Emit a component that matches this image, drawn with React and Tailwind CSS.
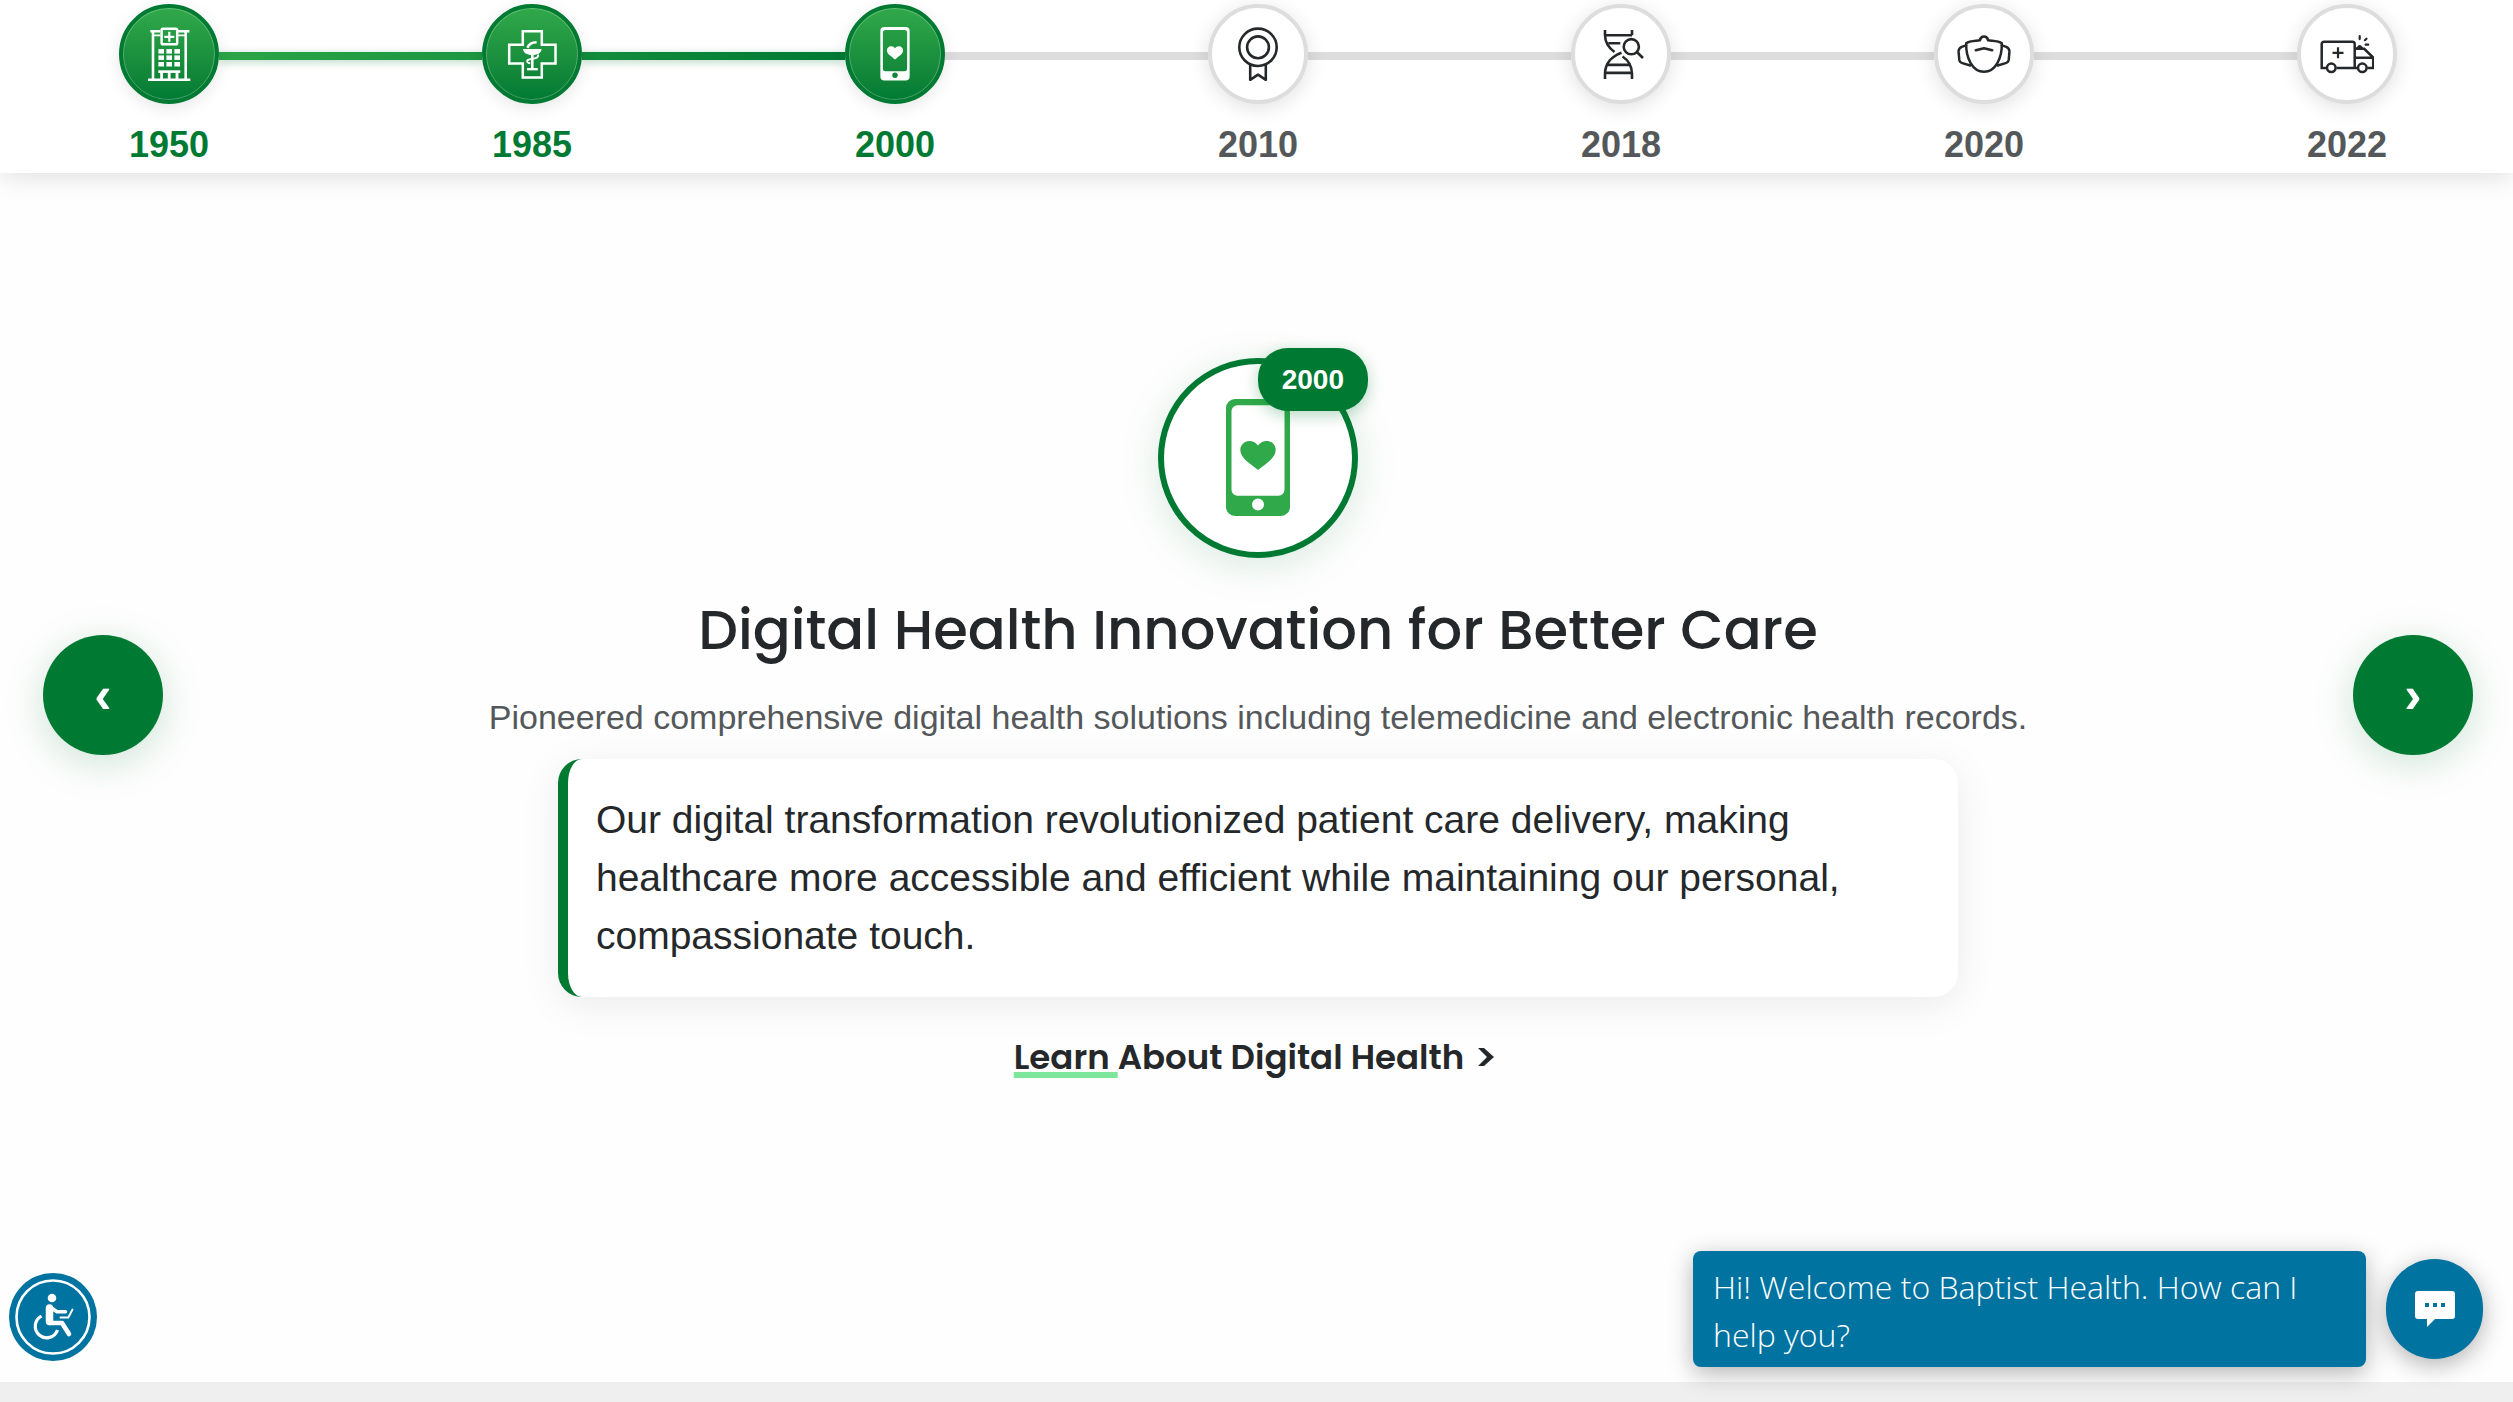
import React from "react";

const line = {
  fill: "none",
  stroke: "currentColor",
  strokeWidth: 2.3,
};

function HospitalIcon() {
  return (
    <svg viewBox="0 0 54 54" className="size-[54px]" aria-hidden="true">
      <g {...line}>
        <path d="M6 52.7h42.3M11 5v47M43.7 5v47" strokeWidth="2.6" />
        <path d="M8.3 4.2h10M36 4.2h11.4" strokeWidth="2.6" />
        <path d="M11 8.4h7.5M36 8.4h7.5" strokeWidth="1.6" />
        <rect x="19.6" y="1.7" width="15.6" height="15.6" rx="1.6" strokeWidth="2.5" />
        <path d="M27.3 4.8v10M22.3 9.8h10" strokeWidth="2.2" />
        <path d="M16.3 44.6h22" strokeWidth="2.6" />
        <path d="M19.6 45v7M27.2 45v7M35 45v7" strokeWidth="2.8" />
      </g>
      {[16.4, 24.4, 32.4].map((x) =>
        [22.1, 28.4, 35].map((y) => (
          <rect key={`${x}-${y}`} x={x} y={y} width="5.6" height="4.5" fill="currentColor" />
        ))
      )}
    </svg>
  );
}

function PharmacyIcon() {
  return (
    <svg viewBox="0 0 54 54" className="size-[54px]" aria-hidden="true">
      <g {...line}>
        <path d="M17.8 4.2h19v13.6h13.7v18.8H36.8v13.9h-19V36.6H4.2V17.8h13.6z" strokeWidth="2.5" />
        <path d="M22.6 20.8c1.2-4 4-5.6 9-5.6" strokeWidth="2.4" />
        <path d="M27.3 27v15" strokeWidth="2.6" />
        <path d="M22 42.2h10.8" />
        <path d="M33 27.5c.8 3-2.4 4-5.7 4.4-4.6.5-6 1.6-4.8 3.4.5.8 1.4 1 2.7 1" strokeWidth="1.9" />
      </g>
      <path d="M18 22h18.6c-.3 3.8-3.6 6-9.3 6S18.3 25.800 18 22z" fill="currentColor" />
    </svg>
  );
}

function PhoneIcon({ className }) {
  return (
    <svg viewBox="0 0 118 118" className={className} aria-hidden="true">
      <path
        fill="currentColor"
        fillRule="evenodd"
        d="M36 0h46a9 9 0 0 1 9 9v99a9 9 0 0 1-9 9H36a9 9 0 0 1-9-9V9a9 9 0 0 1 9-9zM38.5 6.3a6 6 0 0 0-6 6v78.4a6 6 0 0 0 6 6h41a6 6 0 0 0 6-6V12.3a6 6 0 0 0-6-6zM59 99.5a6 6 0 1 0 0 12 6 6 0 0 0 0-12z"
      />
      <path
        fill="currentColor"
        d="M59 71C52 65 41.3 59.5 41.3 51c0-5 4-9 9-9 3.7 0 7 2 8.700 4.500C60.7 44 64 42 67.7 42c5 0 9 4 9 9 0 8.500-10.700 14-17.700 20z"
      />
    </svg>
  );
}

function AwardIcon() {
  return (
    <svg viewBox="0 0 54 54" className="size-[54px]" aria-hidden="true">
      <g {...line} strokeWidth="2.6" strokeLinejoin="round">
        <circle cx="27" cy="20.3" r="18.7" />
        <circle cx="27" cy="20.3" r="10.9" />
        <path d="M19.2 38v14.800l7.800-5.100 7.800 5.100V38" />
      </g>
    </svg>
  );
}

function DnaIcon() {
  return (
    <svg viewBox="0 0 54 54" className="size-[54px]" aria-hidden="true">
      <g {...line} strokeWidth="2.6">
        <path d="M11 3v5c0 7 4 13 9.500 17M38 3v5.200" />
        <path d="M11 8.200h22M38 8.200h-6M14.300 16.300h12" />
        <circle cx="37.300" cy="19.700" r="7.600" />
        <path d="M42.800 25l6.200 6" />
        <path d="M11 52v-5c0-11 7.500-18 16.500-21.300M38 52v-5c0-8-4-14-9.500-17.500" />
        <path d="M12.500 37.800h24M11 45.800h27" strokeWidth="2.800" />
      </g>
    </svg>
  );
}

function MaskIcon() {
  return (
    <svg viewBox="0 0 54 54" className="size-[54px]" aria-hidden="true">
      <g {...line} strokeWidth="2.5" strokeLinecap="round" strokeLinejoin="round">
        <path d="M9.200 16.200C13 13.400 19 14 23 13.200c.8-4.800 7.200-4.800 8 0 4 .8 10 .2 13.800 3C45.200 31 38.500 44.800 27 44.800S8.800 31 9.200 16.200z" />
        <path d="M9 18.400l-4.300 1.500c-2.400 1-3.200 2.600-3.100 5l.7 8c.3 1.800 1 2.600 3 3.200l8 2.400M45 18.400l4.300 1.500c2.400 1 3.200 2.600 3.100 5l-.7 8c-.3 1.800-1 2.600-3 3.200l-8 2.400" />
        <path d="M18.800 23.300L27 21.200l8.200 2.100" />
      </g>
    </svg>
  );
}

function AmbulanceIcon() {
  return (
    <svg viewBox="0 0 54 54" className="size-[54px]" aria-hidden="true">
      <g {...line} strokeWidth="2.5">
        <path d="M6 41H1.700V17a2.300 2.300 0 0 1 2.300-2.300h28.400a2.300 2.300 0 0 1 2.300 2.300v24M16.500 41h20.700M47.300 41h5.900V30.500l-9-8.700h-9.500M35 30.800h18" />
        <circle cx="11.300" cy="40.800" r="4.300" />
        <circle cx="42.300" cy="40.800" r="4.300" />
        <path d="M18 20.300v11M12.500 25.800h11" strokeWidth="2.200" />
        <path d="M39.700 9.200v2.900M44.900 13.200l1.600-1.500M45.600 17.700h2.600" strokeLinecap="round" strokeWidth="2.200" />
      </g>
      <path d="M36 21.800c.4-1.800 1.600-2.300 2.200-3.200.6-.9 2.400-.9 3 0 .6.900 1.800 1.400 2.200 3.200z" fill="currentColor" />
    </svg>
  );
}

function AccessibilityIcon() {
  return (
    <svg viewBox="0 0 88 88" className="size-[88px]" aria-hidden="true">
      <g fill="none" stroke="currentColor" strokeLinecap="round" strokeLinejoin="round">
        <circle cx="44" cy="44" r="36.500" strokeWidth="2.600" />
        <path d="M40.500 35v13.500" strokeWidth="7.500" />
        <path d="M40.500 50h12.500l7 11" strokeWidth="4.600" />
        <path d="M42.500 35l5.500 3.700h8.500" strokeWidth="3.600" />
        <path d="M51.500 44.500h7.800l4.200-8" strokeWidth="1.900" />
        <path d="M32.500 43.200A11.400 11.400 0 1 0 48.500 57" strokeWidth="3.200" strokeLinecap="butt" />
      </g>
      <circle cx="43" cy="25" r="4.300" fill="currentColor" />
    </svg>
  );
}

function ChatIcon() {
  return (
    <svg viewBox="0 0 40 36" className="h-9 w-10" aria-hidden="true">
      <path
        fill="currentColor"
        fillRule="evenodd"
        d="M3 0h34a3 3 0 0 1 3 3v22a3 3 0 0 1-3 3H20l-8 8v-8H3a3 3 0 0 1-3-3V3a3 3 0 0 1 3-3zM10 12v4h4v-4zM18 12v4h4v-4zM26 12v4h4v-4z"
      />
    </svg>
  );
}

const milestones = [
  { year: "1950", icon: <HospitalIcon />, reached: true, connector: "bg-linear-to-r from-[#2ba547] to-[#1b9641] shadow-[0_2px_8px_rgba(0,122,51,0.3)]" },
  { year: "1985", icon: <PharmacyIcon />, reached: true, connector: "bg-linear-to-r from-[#128c3c] to-[#007a33] shadow-[0_2px_8px_rgba(0,122,51,0.3)]" },
  { year: "2000", icon: <PhoneIcon className="size-[54px]" />, reached: true, connector: "bg-[#dddddd]" },
  { year: "2010", icon: <AwardIcon />, connector: "bg-[#dddddd]" },
  { year: "2018", icon: <DnaIcon />, connector: "bg-[#dddddd]" },
  { year: "2020", icon: <MaskIcon />, connector: "bg-[#dddddd]" },
  { year: "2022", icon: <AmbulanceIcon /> },
];

function Timeline() {
  return (
    <nav
      aria-label="Timeline"
      className="relative flex items-start bg-white pt-1 pr-[116px] pb-2 pl-[119px] shadow-[0_4px_24px_rgba(0,0,0,0.12)]"
    >
      {milestones.map(({ year, icon, reached, connector }) => (
        <React.Fragment key={year}>
          <button
            type="button"
            className={`relative z-10 flex w-[100px] shrink-0 flex-col items-center gap-[21px] ${
              reached ? "text-[#007a33]" : "text-[#54585a]"
            }`}
          >
            <span
              className={`flex size-[100px] items-center justify-center rounded-full border-4 ${
                reached
                  ? "border-[#007a33] bg-linear-to-b from-[#30a94a] to-[#007a33] text-white shadow-[0_4px_16px_rgba(0,0,0,0.1),inset_0_0_0_1px_rgba(255,255,255,0.25)]"
                  : "border-[#dddddd] bg-white text-[#25282a] shadow-[0_4px_20px_rgba(0,0,0,0.12)]"
              }`}
            >
              {icon}
            </span>
            <span className="text-4xl/10 font-bold">{year}</span>
          </button>
          {connector && <span className={`mt-12 h-2 flex-1 ${connector}`} />}
        </React.Fragment>
      ))}
    </nav>
  );
}

function ArrowButton({ label, children }) {
  return (
    <button
      type="button"
      aria-label={label}
      className="mt-[277px] flex size-[120px] shrink-0 items-center justify-center rounded-full bg-[#007a33] text-[52px] font-bold text-white shadow-[0_8px_40px_rgba(0,122,51,0.2)]"
    >
      {children}
    </button>
  );
}

export default function App() {
  return (
    <div className="relative flex min-h-screen flex-col bg-[#fefefe] font-['Liberation_Sans',Arial,sans-serif] text-[#25282a]">
      <Timeline />

      <main className="flex flex-1 items-start justify-between pt-[185px] pr-10 pl-[43px]">
        <ArrowButton label="Previous milestone">‹</ArrowButton>

        <article className="flex flex-col items-center">
          <div className="relative flex size-[200px] items-center justify-center rounded-full border-[6px] border-[#007a33] bg-white text-[#30a94a] shadow-[0_8px_40px_rgba(0,122,51,0.15)]">
            <PhoneIcon className="size-[118px]" />
            <span className="absolute -top-4 -right-4 rounded-[30px] bg-[#007a33] px-6 py-3 text-[28px]/[39px] font-bold text-white shadow-[0_4px_16px_rgba(0,122,51,0.3)]">
              2000
            </span>
          </div>

          <h1 className="mt-9 font-['Poppins','Inter',sans-serif] text-[56px]/[72px] font-medium">
            Digital Health Innovation for Better Care
          </h1>
          <p className="mt-6 text-[34px]/[54px] text-[#54585a]">
            Pioneered comprehensive digital health solutions including telemedicine and electronic health records.
          </p>
          <p className="mt-[15px] w-[1400px] max-w-full rounded-3xl border-l-10 border-[#007a33] bg-white px-7 py-8 text-[39px]/[58px] shadow-[0_8px_40px_rgba(0,0,0,0.08)]">
            Our digital transformation revolutionized patient care delivery, making healthcare more accessible and
            efficient while maintaining our personal, compassionate touch.
          </p>
          <a
            href="#digital-health"
            className="mt-9 flex items-center pr-2 font-['Poppins','Inter',sans-serif] text-[34px]/[48px] font-semibold"
          >
            <span>
              <span className="underline decoration-[#7ee69a] decoration-[6px] underline-offset-[3px] [text-decoration-skip-ink:none]">
                Learn&nbsp;
              </span>
              About Digital Health
            </span>
            <svg viewBox="0 0 16 18" className="ml-3.5 h-[18px] w-4" aria-hidden="true">
              <path d="M0 0h6l10 9-10 9H0l9-9z" fill="currentColor" />
            </svg>
          </a>
        </article>

        <ArrowButton label="Next milestone">›</ArrowButton>
      </main>

      <footer className="h-5 bg-[#efefef]" />

      <button
        type="button"
        aria-label="Accessibility options"
        className="absolute bottom-[41px] left-[9px] rounded-full bg-[#0073a1] text-white"
      >
        <AccessibilityIcon />
      </button>

      <div className="absolute right-[30px] bottom-[35px] flex items-center gap-5">
        <p className="w-[673px] rounded-lg bg-[#0073a1] px-5 pt-3 pb-2 font-['Segoe_UI','Open_Sans',sans-serif] text-[32px]/[48px] font-light text-white shadow-[0_6px_24px_rgba(0,0,0,0.3)]">
          Hi! Welcome to Baptist Health. How can I help you?
        </p>
        <button
          type="button"
          aria-label="Open chat"
          className="flex h-[100px] w-[97px] items-center justify-center rounded-full bg-[#0073a1] text-white shadow-[0_6px_24px_rgba(0,0,0,0.3)]"
        >
          <ChatIcon />
        </button>
      </div>
    </div>
  );
}
